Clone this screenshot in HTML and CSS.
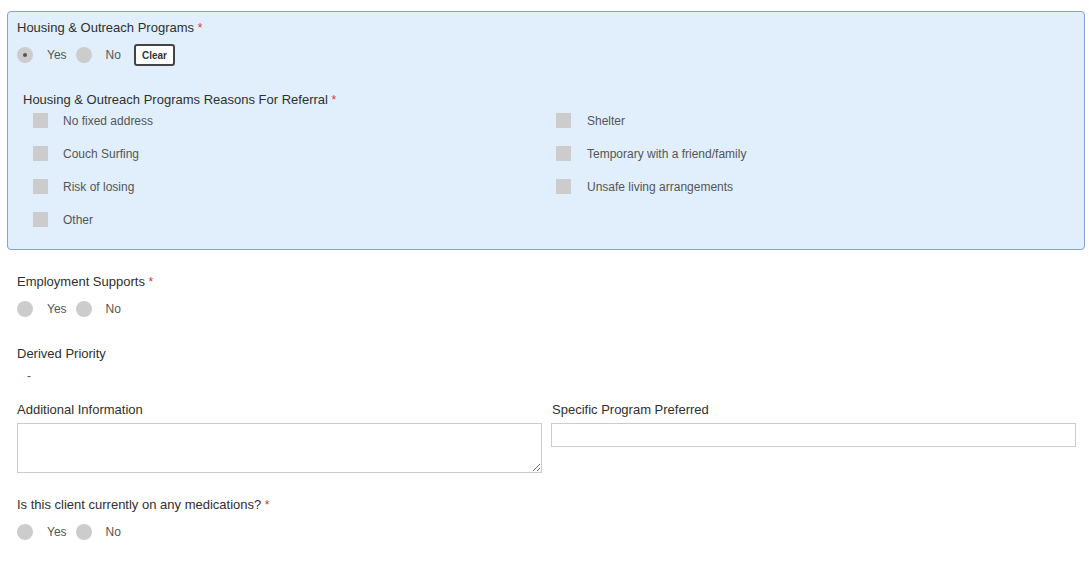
FILE: index.html
```html
<!DOCTYPE html>
<html>
  <head>
    <meta charset="UTF-8" />
    <meta name="viewport" content="width=device-width, initial-scale=1.0" />
    <title>Referral Form</title>
    <link rel="stylesheet" href="styles.css">
  </head>
  <body>
    <main class="page">
      <section class="panel">
        <div class="field-label">Housing &amp; Outreach Programs <span class="req">*</span></div>
        <div class="radio-row">
          <label class="opt"><input type="radio" name="housing" checked /><span>Yes</span></label>
          <label class="opt"><input type="radio" name="housing" /><span>No</span></label>
          <button class="clear-btn" type="button">Clear</button>
        </div>

        <div class="sub-group">
          <div class="field-label">Housing &amp; Outreach Programs Reasons For Referral <span class="req">*</span></div>
          <div class="check-grid">
            <label class="chk"><input type="checkbox" /><span>No fixed address</span></label>
            <label class="chk"><input type="checkbox" /><span>Shelter</span></label>
            <label class="chk"><input type="checkbox" /><span>Couch Surfing</span></label>
            <label class="chk"><input type="checkbox" /><span>Temporary with a friend/family</span></label>
            <label class="chk"><input type="checkbox" /><span>Risk of losing</span></label>
            <label class="chk"><input type="checkbox" /><span>Unsafe living arrangements</span></label>
            <label class="chk"><input type="checkbox" /><span>Other</span></label>
          </div>
        </div>
      </section>

      <div class="field employment">
        <div class="field-label">Employment Supports <span class="req">*</span></div>
        <div class="radio-row">
          <label class="opt"><input type="radio" name="employment" /><span>Yes</span></label>
          <label class="opt"><input type="radio" name="employment" /><span>No</span></label>
        </div>
      </div>

      <div class="field priority">
        <div class="field-label">Derived Priority</div>
        <div class="value">-</div>
      </div>

      <div class="field-row">
        <div class="col">
          <div class="field-label">Additional Information</div>
          <textarea class="text-area"></textarea>
        </div>
        <div class="col">
          <div class="field-label">Specific Program Preferred</div>
          <input class="text-input" type="text" />
        </div>
      </div>

      <div class="field meds">
        <div class="field-label">Is this client currently on any medications? <span class="req">*</span></div>
        <div class="radio-row">
          <label class="opt"><input type="radio" name="meds" /><span>Yes</span></label>
          <label class="opt"><input type="radio" name="meds" /><span>No</span></label>
        </div>
      </div>
    </main>
  </body>
</html>
```

FILE: styles.css
```css
* {
  box-sizing: border-box;
}
body {
  margin: 0;
  background: #ffffff;
  font-family: "Liberation Sans", Arial, sans-serif;
  font-size: 12px;
  color: #333333;
}
.page {
  padding: 11px 7px 0 7px;
}
.panel {
  background-color: #e1effd;
  border: 1px solid #86a3c9;
  border-radius: 4px;
  padding: 9px 9px 21px 9px;
  height: 239px;
}
.field-label {
  font-size: 13px;
  line-height: 14px;
  height: 14px;
  color: #2f2f2f;
}
.req {
  color: #d9332a;
  font-size: 12px;
}
.radio-row {
  display: flex;
  align-items: center;
  height: 22px;
  margin-top: 9px;
}
.opt {
  display: flex;
  align-items: center;
  color: #555555;
  margin-right: 9px;
}
.opt span {
  margin-left: 14px;
}
.opt input,
.chk input {
  appearance: none;
  -webkit-appearance: none;
  margin: 0;
  background-color: #cccccc;
  border: none;
}
.opt input {
  width: 16px;
  height: 16px;
  border-radius: 50%;
  position: relative;
}
.opt input:checked::after {
  content: "";
  position: absolute;
  left: 6px;
  top: 6px;
  width: 4px;
  height: 4px;
  border-radius: 50%;
  background-color: #555555;
}
.clear-btn {
  margin-left: 4px;
  width: 41px;
  height: 22px;
  padding: 0;
  background: #ffffff;
  border: 2px solid #444444;
  border-radius: 3px;
  font-family: "Liberation Sans", Arial, sans-serif;
  font-size: 10px;
  font-weight: bold;
  color: #333333;
}
.sub-group {
  margin-top: 27px;
  padding-left: 6px;
}
.check-grid {
  display: grid;
  grid-template-columns: 523px 1fr;
  row-gap: 18px;
  margin-top: 6px;
  padding-left: 10px;
}
.chk {
  display: flex;
  align-items: center;
  height: 15px;
  color: #555555;
}
.chk input {
  width: 15px;
  height: 15px;
}
.chk span {
  margin-left: 15px;
}
.check-grid .chk:nth-child(even) span {
  margin-left: 16px;
}
.field {
  padding: 0 10px;
}
.employment {
  margin-top: 25px;
}
.priority {
  margin-top: 27px;
}
.value {
  margin-top: 8px;
  padding-left: 10px;
  line-height: 14px;
  color: #555555;
}
.field-row {
  display: grid;
  grid-template-columns: 1fr 1fr;
  column-gap: 9px;
  padding: 0 9px 0 10px;
  margin-top: 20px;
}
.col .field-label {
  margin-bottom: 6px;
}
.col:last-child .field-label {
  padding-left: 1px;
}
.text-area {
  display: block;
  width: 100%;
  height: 50px;
  border: 1px solid #cccccc;
  border-radius: 0;
  margin: 0;
  resize: both;
}
.text-input {
  display: block;
  width: 100%;
  height: 24px;
  border: 1px solid #cccccc;
  border-radius: 0;
  margin: 0;
}
.meds {
  margin-top: 25px;
}
```
